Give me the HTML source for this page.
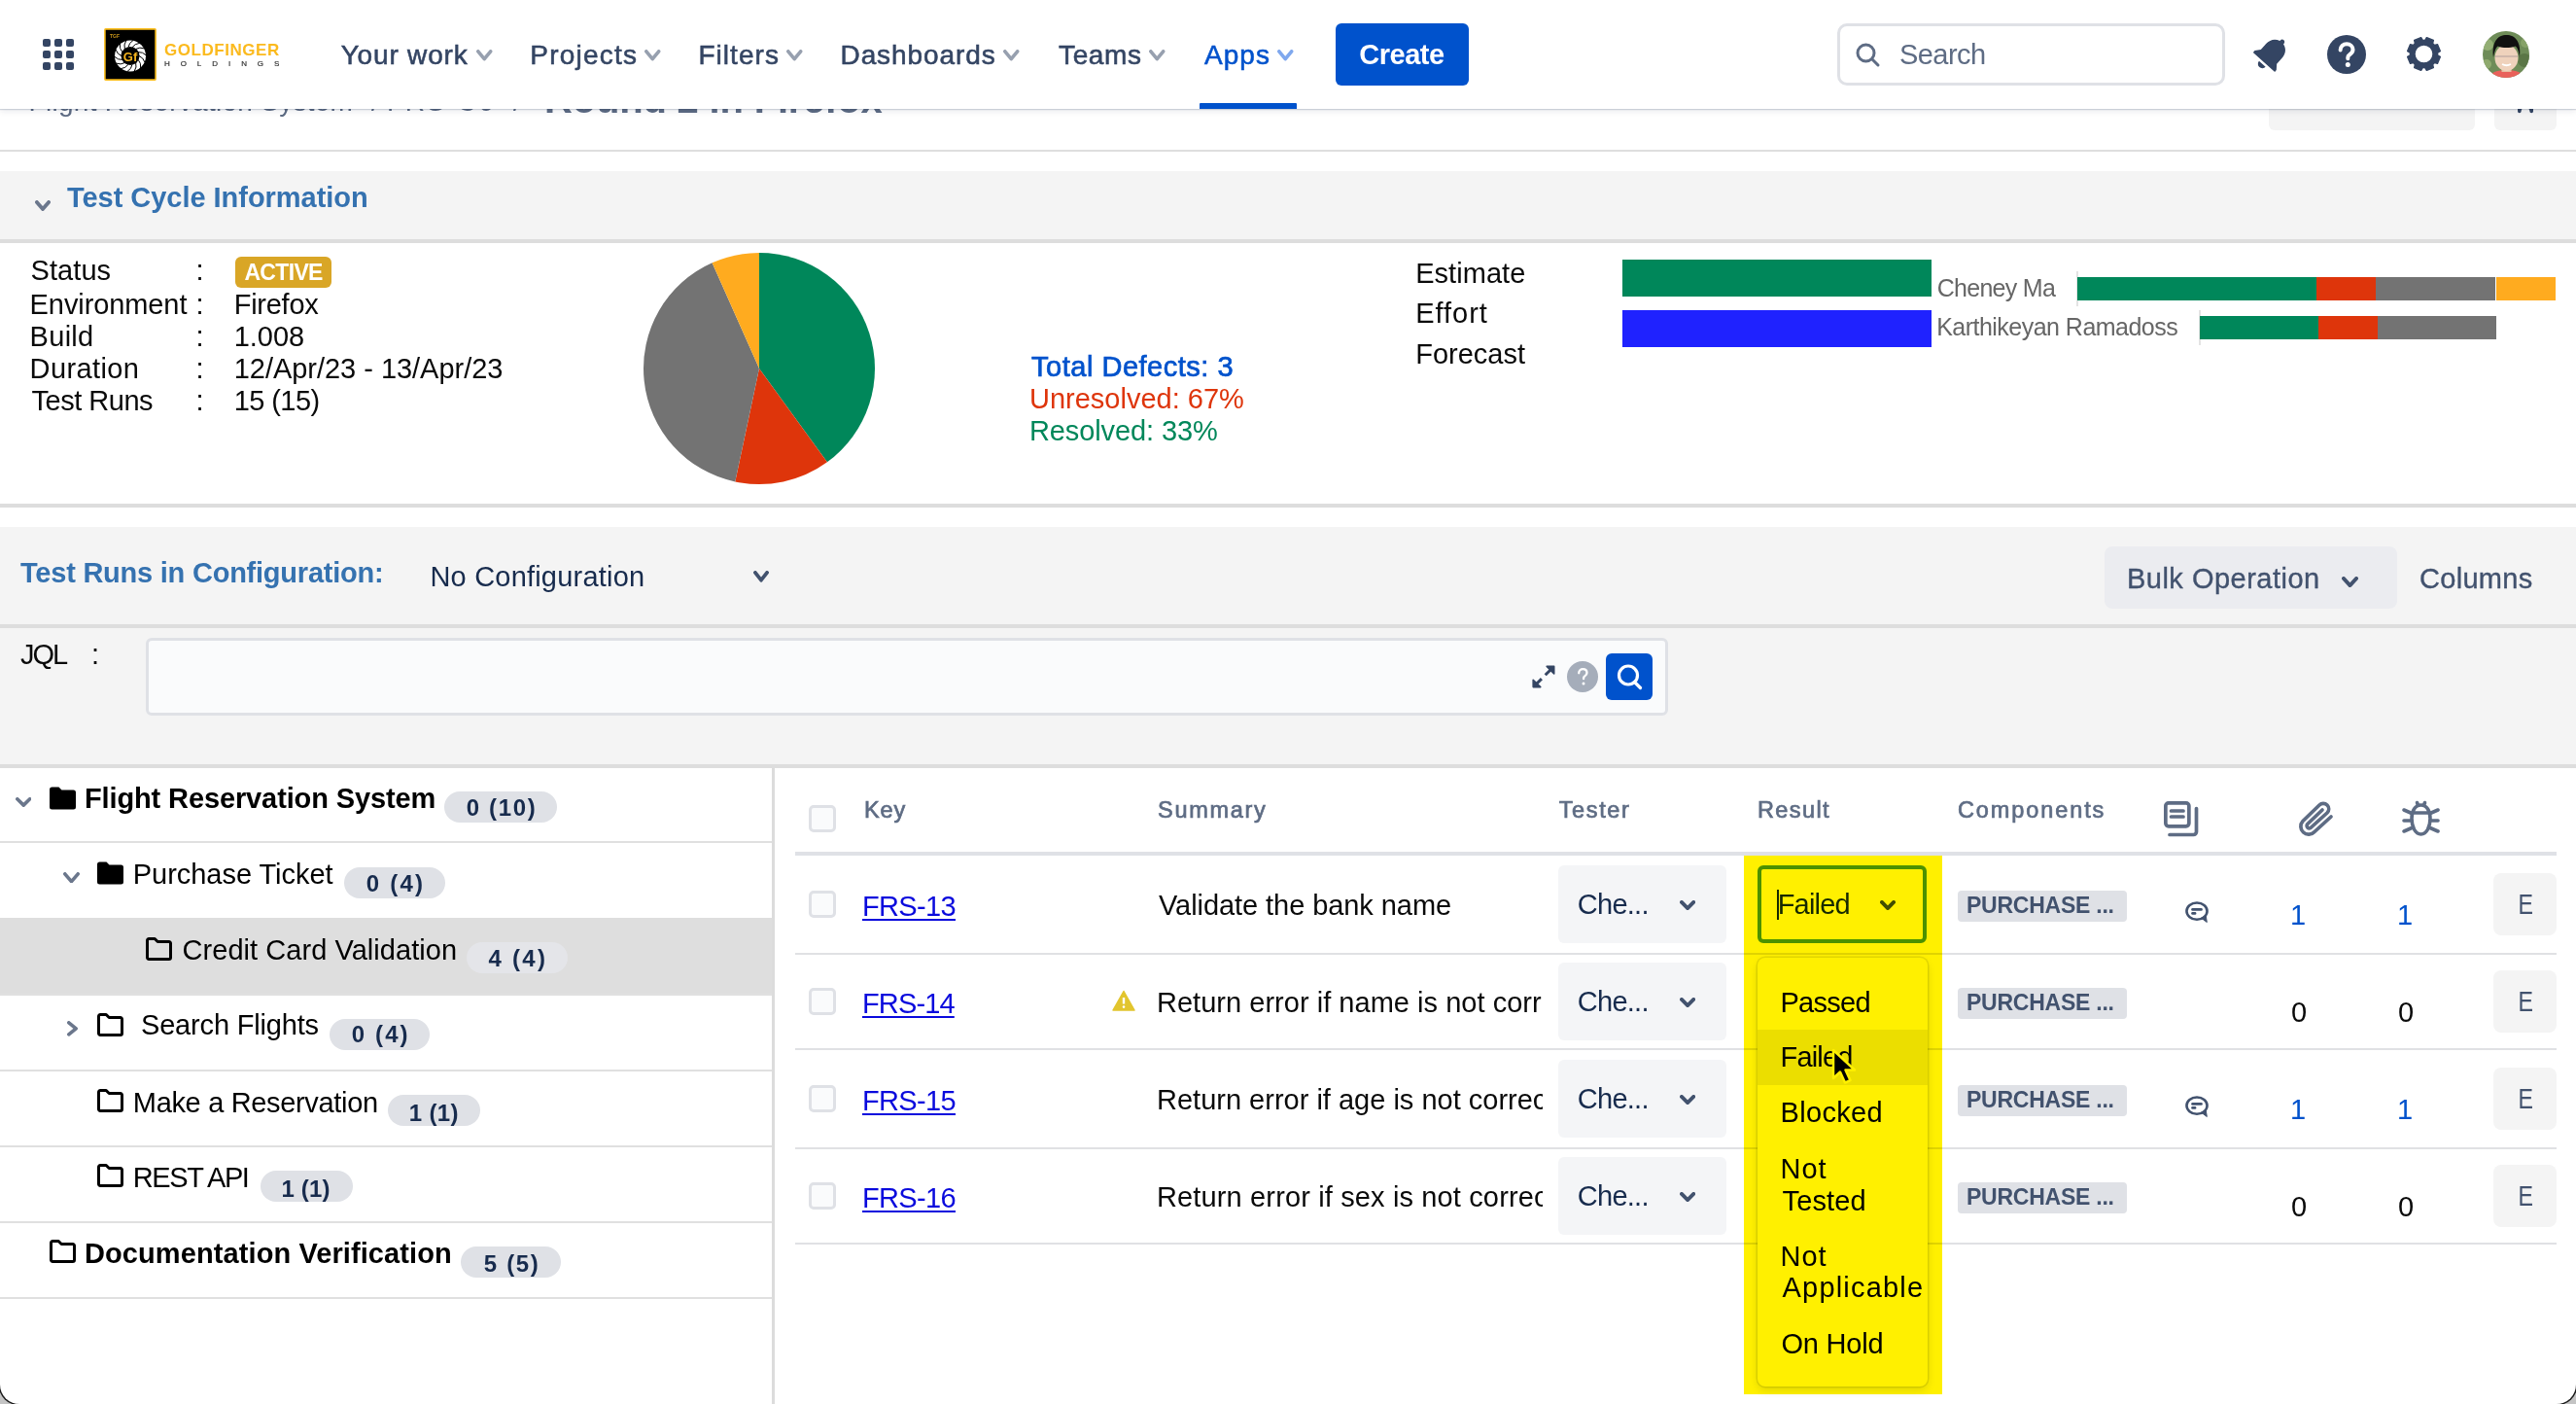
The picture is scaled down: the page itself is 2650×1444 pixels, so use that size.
<!DOCTYPE html>
<html><head><meta charset="utf-8"><style>
html,body{margin:0;padding:0;}
body{width:2650px;height:1444px;overflow:hidden;background:#C4C4C4;font-family:"Liberation Sans",sans-serif;white-space:pre;}
#win{position:absolute;left:0;top:0;width:2650px;height:1444px;background:#fff;border-radius:0 0 20px 20px;overflow:hidden;box-shadow:0 0 0 1.5px #1a1a1a;}
#hdr{position:absolute;left:0;top:0;width:2650px;height:112px;background:#fff;box-shadow:0 1px 1px rgba(9,30,66,0.16),0 3px 6px rgba(9,30,66,0.08);z-index:5;}
</style></head><body><div id="win">
<div style="position:absolute;left:29.60px;top:90.60px;font-size:28px;line-height:28px;font-weight:400;color:#5E6C84;letter-spacing:0.272px;">Flight Reservation System</div><div style="position:absolute;left:382.00px;top:90.60px;font-size:28px;line-height:28px;font-weight:400;color:#5E6C84;">/</div><div style="position:absolute;left:398.00px;top:90.60px;font-size:28px;line-height:28px;font-weight:400;color:#5E6C84;letter-spacing:1.691px;">FRS-C6</div><div style="position:absolute;left:528.00px;top:90.60px;font-size:28px;line-height:28px;font-weight:400;color:#5E6C84;">/</div><div style="position:absolute;left:560.00px;top:82.30px;font-size:40px;line-height:40px;font-weight:700;color:#5E6C84;letter-spacing:-0.192px;">Round 2 in Firefox</div><div style="position:absolute;left:2334px;top:80px;width:212px;height:54px;background:#F4F4F4;border-radius:6px"></div><div style="position:absolute;left:2566px;top:80px;width:64px;height:54px;background:#F4F4F4;border-radius:6px"></div><svg style="position:absolute;left:2588px;top:100px" width="20" height="18" viewBox="0 0 20 18"><path d="M2 12a8 8 0 0 1 16 0v2.5a1.8 1.8 0 0 1-3.6 0a4.4 4.4 0 0 0-8.8 0a1.8 1.8 0 0 1-3.6 0z" fill="#344563"/></svg><div style="position:absolute;left:0px;top:154px;width:2650px;height:2px;background:#DEDEDE"></div>
<div style="position:absolute;left:0px;top:176px;width:2650px;height:70px;background:#F4F4F4"></div><div style="position:absolute;left:0px;top:246px;width:2650px;height:4px;background:#DDDDDD"></div><svg style="position:absolute;left:36px;top:205.5px" width="16" height="11.0" viewBox="0 0 16 11.0"><polyline points="1.9,1.9 8.0,9.1 14.1,1.9" fill="none" stroke="#6B778C" stroke-width="3.8" stroke-linecap="round" stroke-linejoin="round"/></svg><div style="position:absolute;left:69.00px;top:189.00px;font-size:29px;line-height:29px;font-weight:700;color:#3572B0;letter-spacing:-0.036px;">Test Cycle Information</div>
<div style="position:absolute;left:31.60px;top:263.50px;font-size:29px;line-height:29px;font-weight:400;color:#0A0A0A;letter-spacing:0.057px;">Status</div><div style="position:absolute;left:201.50px;top:263.50px;font-size:29px;line-height:29px;font-weight:400;color:#0A0A0A;">:</div><div style="position:absolute;left:30.60px;top:298.90px;font-size:29px;line-height:29px;font-weight:400;color:#0A0A0A;letter-spacing:-0.094px;">Environment</div><div style="position:absolute;left:201.50px;top:298.90px;font-size:29px;line-height:29px;font-weight:400;color:#0A0A0A;">:</div><div style="position:absolute;left:30.60px;top:332.00px;font-size:29px;line-height:29px;font-weight:400;color:#0A0A0A;letter-spacing:0.286px;">Build</div><div style="position:absolute;left:201.50px;top:332.00px;font-size:29px;line-height:29px;font-weight:400;color:#0A0A0A;">:</div><div style="position:absolute;left:30.60px;top:365.00px;font-size:29px;line-height:29px;font-weight:400;color:#0A0A0A;letter-spacing:0.388px;">Duration</div><div style="position:absolute;left:201.50px;top:365.00px;font-size:29px;line-height:29px;font-weight:400;color:#0A0A0A;">:</div><div style="position:absolute;left:32.60px;top:397.50px;font-size:29px;line-height:29px;font-weight:400;color:#0A0A0A;letter-spacing:-0.493px;">Test Runs</div><div style="position:absolute;left:201.50px;top:397.50px;font-size:29px;line-height:29px;font-weight:400;color:#0A0A0A;">:</div><div style="position:absolute;left:242px;top:264px;width:99px;height:32px;background:#D9A626;border-radius:6px"></div><div style="position:absolute;left:251.40px;top:268.50px;font-size:23px;line-height:23px;font-weight:700;color:#fff;letter-spacing:-0.660px;">ACTIVE</div><div style="position:absolute;left:240.70px;top:298.90px;font-size:29px;line-height:29px;font-weight:400;color:#0A0A0A;letter-spacing:-0.255px;">Firefox</div><div style="position:absolute;left:240.70px;top:332.00px;font-size:29px;line-height:29px;font-weight:400;color:#0A0A0A;letter-spacing:-0.036px;">1.008</div><div style="position:absolute;left:240.70px;top:365.00px;font-size:29px;line-height:29px;font-weight:400;color:#0A0A0A;letter-spacing:-0.028px;">12/Apr/23 - 13/Apr/23</div><div style="position:absolute;left:240.70px;top:397.50px;font-size:29px;line-height:29px;font-weight:400;color:#0A0A0A;letter-spacing:-0.571px;">15 (15)</div><svg style="position:absolute;left:661px;top:259px" width="240" height="240" viewBox="0 0 240 240"><path d="M120 120 L120.00 1.00 A119 119 0 0 1 189.95 216.27 Z" fill="#00875A"/><path d="M120 120 L189.95 216.27 A119 119 0 0 1 95.26 236.40 Z" fill="#DE350B"/><path d="M120 120 L95.26 236.40 A119 119 0 0 1 71.60 11.29 Z" fill="#737373"/><path d="M120 120 L71.60 11.29 A119 119 0 0 1 120.00 1.00 Z" fill="#FFAB1F"/></svg><div style="position:absolute;left:1061.00px;top:362.60px;font-size:29px;line-height:29px;font-weight:400;color:#0052CC;letter-spacing:0.517px;-webkit-text-stroke:0.7px #0052CC">Total Defects: 3</div><div style="position:absolute;left:1059.00px;top:395.50px;font-size:29px;line-height:29px;font-weight:400;color:#DE350B;">Unresolved: 67%</div><div style="position:absolute;left:1059.00px;top:428.70px;font-size:29px;line-height:29px;font-weight:400;color:#00875A;letter-spacing:-0.106px;">Resolved: 33%</div><div style="position:absolute;left:1456.20px;top:267.00px;font-size:29px;line-height:29px;font-weight:400;color:#0A0A0A;letter-spacing:0.045px;">Estimate</div><div style="position:absolute;left:1456.20px;top:307.70px;font-size:29px;line-height:29px;font-weight:400;color:#0A0A0A;letter-spacing:0.976px;">Effort</div><div style="position:absolute;left:1456.20px;top:349.70px;font-size:29px;line-height:29px;font-weight:400;color:#0A0A0A;">Forecast</div><div style="position:absolute;left:1669px;top:267px;width:318px;height:37.5px;background:#00875A"></div><div style="position:absolute;left:1669px;top:319px;width:318px;height:37.5px;background:#1F22FF"></div><div style="position:absolute;left:1992.70px;top:283.90px;font-size:25px;line-height:25px;font-weight:400;color:#666;letter-spacing:-0.718px;">Cheney Ma</div><div style="position:absolute;left:1992.20px;top:324.10px;font-size:25px;line-height:25px;font-weight:400;color:#666;letter-spacing:-0.524px;">Karthikeyan Ramadoss</div><div style="position:absolute;left:2136px;top:279px;width:2px;height:36px;background:#E3E3E3"></div><div style="position:absolute;left:2137px;top:285px;width:246px;height:23.7px;background:#00875A"></div><div style="position:absolute;left:2383px;top:285px;width:61.4px;height:23.7px;background:#DE350B"></div><div style="position:absolute;left:2444.4px;top:285px;width:123.1px;height:23.7px;background:#737373"></div><div style="position:absolute;left:2567.5px;top:285px;width:61.5px;height:23.7px;background:#FFAB1F"></div><div style="position:absolute;left:2262px;top:319px;width:2px;height:36px;background:#E3E3E3"></div><div style="position:absolute;left:2263px;top:325.3px;width:121.6px;height:23.7px;background:#00875A"></div><div style="position:absolute;left:2384.6px;top:325.3px;width:61.2px;height:23.7px;background:#DE350B"></div><div style="position:absolute;left:2445.8px;top:325.3px;width:122.2px;height:23.7px;background:#737373"></div><div style="position:absolute;left:0px;top:518px;width:2650px;height:4px;background:#DDDDDD"></div>
<div style="position:absolute;left:0px;top:542px;width:2650px;height:100px;background:#F4F4F4"></div><div style="position:absolute;left:0px;top:642px;width:2650px;height:4px;background:#DDDDDD"></div><div style="position:absolute;left:0px;top:646px;width:2650px;height:140px;background:#F4F4F4"></div><div style="position:absolute;left:0px;top:786px;width:2650px;height:4px;background:#DDDDDD"></div><div style="position:absolute;left:21.00px;top:574.90px;font-size:29px;line-height:29px;font-weight:700;color:#3572B0;letter-spacing:-0.230px;">Test Runs in Configuration:</div><div style="position:absolute;left:442.40px;top:578.80px;font-size:29px;line-height:29px;font-weight:400;color:#172B4D;letter-spacing:0.207px;">No Configuration</div><svg style="position:absolute;left:775px;top:587px" width="16" height="11.600000000000023" viewBox="0 0 16 11.600000000000023"><polyline points="1.9,1.9 8.0,9.700000000000022 14.1,1.9" fill="none" stroke="#42526E" stroke-width="3.8" stroke-linecap="round" stroke-linejoin="round"/></svg><div style="position:absolute;left:2165px;top:562px;width:301px;height:64px;background:#EBECF0;border-radius:8px"></div><div style="position:absolute;left:2188.00px;top:580.50px;font-size:29px;line-height:29px;font-weight:400;color:#42526E;letter-spacing:0.485px;-webkit-text-stroke:0.35px #42526E">Bulk Operation</div><svg style="position:absolute;left:2409px;top:593px" width="17" height="11" viewBox="0 0 17 11"><polyline points="1.9,1.9 8.5,9.1 15.1,1.9" fill="none" stroke="#42526E" stroke-width="3.8" stroke-linecap="round" stroke-linejoin="round"/></svg><div style="position:absolute;left:2489.00px;top:580.50px;font-size:29px;line-height:29px;font-weight:400;color:#42526E;letter-spacing:0.295px;-webkit-text-stroke:0.35px #42526E">Columns</div><div style="position:absolute;left:21.00px;top:659.00px;font-size:29px;line-height:29px;font-weight:400;color:#0A0A0A;letter-spacing:-2.029px;">JQL</div><div style="position:absolute;left:94.00px;top:659.00px;font-size:29px;line-height:29px;font-weight:400;color:#0A0A0A;">:</div><div style="position:absolute;left:150px;top:656px;width:1566px;height:80px;box-sizing:border-box;background:#FAFBFC;border:3px solid #DFE1E6;border-radius:6px"></div><svg style="position:absolute;left:1575px;top:683px" width="26" height="26" viewBox="0 0 26 26"><path d="M16.2 2.4H23.7V10z" fill="#344563" stroke="#344563" stroke-width="1.6" stroke-linejoin="round"/><path d="M2.2 16.4V23.6H9.8z" fill="#344563" stroke="#344563" stroke-width="1.6" stroke-linejoin="round"/><line x1="14.7" y1="11.3" x2="20" y2="6" stroke="#344563" stroke-width="3"/><line x1="10.9" y1="15.1" x2="5.5" y2="20.5" stroke="#344563" stroke-width="3"/></svg><svg style="position:absolute;left:1612px;top:680px" width="32" height="32" viewBox="0 0 32 32"><circle cx="16" cy="16" r="16" fill="#A5ADBA"/><path d="M12.2 12.3c0-2.4 1.8-4.1 4.2-4.1s4.1 1.6 4.1 3.8c0 1.8-1 2.6-2.2 3.4-0.9 0.6-1.2 1-1.2 1.9v0.9" fill="none" stroke="#fff" stroke-width="2.3" stroke-linecap="round"/><circle cx="17" cy="22.9" r="1.5" fill="#fff"/></svg><div style="position:absolute;left:1652px;top:672px;width:48px;height:48px;background:#0052CC;border-radius:6px"></div><svg style="position:absolute;left:1652px;top:672px" width="48" height="48" viewBox="0 0 48 48"><circle cx="23" cy="22.5" r="9.5" fill="none" stroke="#fff" stroke-width="3.2"/><line x1="29.5" y1="29.5" x2="35.5" y2="35.5" stroke="#fff" stroke-width="3.2" stroke-linecap="round"/></svg>
<div style="position:absolute;left:794px;top:790px;width:3px;height:654px;background:#DCDCDC"></div><div style="position:absolute;left:0px;top:944px;width:794px;height:79px;background:#DEDEDE"></div><div style="position:absolute;left:0px;top:865px;width:794px;height:2px;background:#E0E0E0"></div><div style="position:absolute;left:0px;top:1022px;width:794px;height:2px;background:#E0E0E0"></div><div style="position:absolute;left:0px;top:1100px;width:794px;height:2px;background:#E0E0E0"></div><div style="position:absolute;left:0px;top:1178px;width:794px;height:2px;background:#E0E0E0"></div><div style="position:absolute;left:0px;top:1256px;width:794px;height:2px;background:#E0E0E0"></div><div style="position:absolute;left:0px;top:1334px;width:794px;height:2px;background:#E0E0E0"></div><svg style="position:absolute;left:15.5px;top:819.8px" width="16.5" height="9.900000000000091" viewBox="0 0 16.5 9.900000000000091"><polyline points="1.8,1.8 8.25,8.10000000000009 14.7,1.8" fill="none" stroke="#6B778C" stroke-width="3.6" stroke-linecap="round" stroke-linejoin="round"/></svg><svg style="position:absolute;left:50.6px;top:808.6px" width="27" height="24" viewBox="0 0 27 24"><path d="M0 3a2.5 2.5 0 0 1 2.5-2.5h7l3 3h12a2.5 2.5 0 0 1 2.5 2.5v15a2.5 2.5 0 0 1-2.5 2.5h-22A2.5 2.5 0 0 1 0 21z" fill="#000"/></svg><div style="position:absolute;left:86.90px;top:807.20px;font-size:29px;line-height:29px;font-weight:700;color:#000;letter-spacing:-0.114px;">Flight Reservation System</div><div style="position:absolute;left:457px;top:814px;width:116px;height:32px;background:#DFE1E6;border-radius:16px"></div><div style="position:absolute;left:479.80px;top:819.00px;font-size:24px;line-height:24px;font-weight:700;color:#172B4D;letter-spacing:1.639px;">0 (10)</div><svg style="position:absolute;left:65px;top:896.5px" width="17" height="11.5" viewBox="0 0 17 11.5"><polyline points="1.8,1.8 8.5,9.7 15.2,1.8" fill="none" stroke="#6B778C" stroke-width="3.6" stroke-linecap="round" stroke-linejoin="round"/></svg><svg style="position:absolute;left:100px;top:885.6px" width="27" height="24" viewBox="0 0 27 24"><path d="M0 3a2.5 2.5 0 0 1 2.5-2.5h7l3 3h12a2.5 2.5 0 0 1 2.5 2.5v15a2.5 2.5 0 0 1-2.5 2.5h-22A2.5 2.5 0 0 1 0 21z" fill="#000"/></svg><div style="position:absolute;left:136.80px;top:884.90px;font-size:29px;line-height:29px;font-weight:400;color:#000;letter-spacing:-0.041px;">Purchase Ticket</div><div style="position:absolute;left:354px;top:891.8px;width:103.5px;height:32.0px;background:#DFE1E6;border-radius:16px"></div><div style="position:absolute;left:376.70px;top:896.60px;font-size:24px;line-height:24px;font-weight:700;color:#172B4D;letter-spacing:2.236px;">0 (4)</div><svg style="position:absolute;left:150px;top:964px" width="27" height="24" viewBox="0 0 27 24"><path d="M1.5 3.2a1.7 1.7 0 0 1 1.7-1.7h6l3 3h11.6a1.7 1.7 0 0 1 1.7 1.7v14.6a1.7 1.7 0 0 1-1.7 1.7H3.2a1.7 1.7 0 0 1-1.7-1.7z" fill="none" stroke="#000" stroke-width="3" stroke-linejoin="round"/></svg><div style="position:absolute;left:187.50px;top:962.50px;font-size:29px;line-height:29px;font-weight:400;color:#000;letter-spacing:0.052px;">Credit Card Validation</div><div style="position:absolute;left:480px;top:969.4px;width:104px;height:32.0px;background:#E4E5E9;border-radius:16px"></div><div style="position:absolute;left:502.50px;top:974.30px;font-size:24px;line-height:24px;font-weight:700;color:#172B4D;letter-spacing:2.286px;">4 (4)</div><svg style="position:absolute;left:69px;top:1050px" width="11" height="15.700000000000045" viewBox="0 0 11 15.700000000000045"><polyline points="1.8,1.8 9.2,7.850000000000023 1.8,13.900000000000045" fill="none" stroke="#6B778C" stroke-width="3.6" stroke-linecap="round" stroke-linejoin="round"/></svg><svg style="position:absolute;left:100px;top:1042px" width="27" height="24" viewBox="0 0 27 24"><path d="M1.5 3.2a1.7 1.7 0 0 1 1.7-1.7h6l3 3h11.6a1.7 1.7 0 0 1 1.7 1.7v14.6a1.7 1.7 0 0 1-1.7 1.7H3.2a1.7 1.7 0 0 1-1.7-1.7z" fill="none" stroke="#000" stroke-width="3" stroke-linejoin="round"/></svg><div style="position:absolute;left:145.00px;top:1040.00px;font-size:29px;line-height:29px;font-weight:400;color:#000;letter-spacing:-0.174px;">Search Flights</div><div style="position:absolute;left:338.5px;top:1047.7px;width:103.5px;height:32.0px;background:#DFE1E6;border-radius:16px"></div><div style="position:absolute;left:361.80px;top:1052.00px;font-size:24px;line-height:24px;font-weight:700;color:#172B4D;letter-spacing:2.111px;">0 (4)</div><svg style="position:absolute;left:100px;top:1120px" width="27" height="24" viewBox="0 0 27 24"><path d="M1.5 3.2a1.7 1.7 0 0 1 1.7-1.7h6l3 3h11.6a1.7 1.7 0 0 1 1.7 1.7v14.6a1.7 1.7 0 0 1-1.7 1.7H3.2a1.7 1.7 0 0 1-1.7-1.7z" fill="none" stroke="#000" stroke-width="3" stroke-linejoin="round"/></svg><div style="position:absolute;left:136.80px;top:1119.70px;font-size:29px;line-height:29px;font-weight:400;color:#000;letter-spacing:-0.328px;">Make a Reservation</div><div style="position:absolute;left:399px;top:1126px;width:94.80000000000001px;height:31.59999999999991px;background:#DFE1E6;border-radius:16px"></div><div style="position:absolute;left:420.70px;top:1133.00px;font-size:24px;line-height:24px;font-weight:700;color:#172B4D;letter-spacing:0.361px;">1 (1)</div><svg style="position:absolute;left:100px;top:1197px" width="27" height="24" viewBox="0 0 27 24"><path d="M1.5 3.2a1.7 1.7 0 0 1 1.7-1.7h6l3 3h11.6a1.7 1.7 0 0 1 1.7 1.7v14.6a1.7 1.7 0 0 1-1.7 1.7H3.2a1.7 1.7 0 0 1-1.7-1.7z" fill="none" stroke="#000" stroke-width="3" stroke-linejoin="round"/></svg><div style="position:absolute;left:136.80px;top:1197.00px;font-size:29px;line-height:29px;font-weight:400;color:#000;letter-spacing:-1.412px;">REST API</div><div style="position:absolute;left:267.7px;top:1204px;width:95.0px;height:32px;background:#DFE1E6;border-radius:16px"></div><div style="position:absolute;left:289.40px;top:1210.60px;font-size:24px;line-height:24px;font-weight:700;color:#172B4D;letter-spacing:0.186px;">1 (1)</div><svg style="position:absolute;left:50.6px;top:1275px" width="27" height="24" viewBox="0 0 27 24"><path d="M1.5 3.2a1.7 1.7 0 0 1 1.7-1.7h6l3 3h11.6a1.7 1.7 0 0 1 1.7 1.7v14.6a1.7 1.7 0 0 1-1.7 1.7H3.2a1.7 1.7 0 0 1-1.7-1.7z" fill="none" stroke="#000" stroke-width="3" stroke-linejoin="round"/></svg><div style="position:absolute;left:87.00px;top:1275.00px;font-size:29px;line-height:29px;font-weight:700;color:#000;letter-spacing:0.091px;">Documentation Verification</div><div style="position:absolute;left:474px;top:1282px;width:102.70000000000005px;height:31.5px;background:#DFE1E6;border-radius:16px"></div><div style="position:absolute;left:497.80px;top:1288.30px;font-size:24px;line-height:24px;font-weight:700;color:#172B4D;letter-spacing:1.661px;">5 (5)</div>
<div style="position:absolute;left:832px;top:828.4px;width:28px;height:28px;box-sizing:border-box;border:3px solid #DFE1E6;background:#FAFBFC;border-radius:5px"></div><div style="position:absolute;left:889.00px;top:821.70px;font-size:23.5px;line-height:23.5px;font-weight:400;color:#5E6C84;letter-spacing:0.878px;-webkit-text-stroke:0.7px #5E6C84">Key</div><div style="position:absolute;left:1191.00px;top:821.70px;font-size:23.5px;line-height:23.5px;font-weight:400;color:#5E6C84;letter-spacing:1.702px;-webkit-text-stroke:0.7px #5E6C84">Summary</div><div style="position:absolute;left:1603.70px;top:821.70px;font-size:23.5px;line-height:23.5px;font-weight:400;color:#5E6C84;letter-spacing:1.626px;-webkit-text-stroke:0.7px #5E6C84">Tester</div><div style="position:absolute;left:1808.00px;top:821.70px;font-size:23.5px;line-height:23.5px;font-weight:400;color:#5E6C84;letter-spacing:1.384px;-webkit-text-stroke:0.7px #5E6C84">Result</div><div style="position:absolute;left:2014.00px;top:821.70px;font-size:23.5px;line-height:23.5px;font-weight:400;color:#5E6C84;letter-spacing:1.901px;-webkit-text-stroke:0.7px #5E6C84">Components</div><svg style="position:absolute;left:2224px;top:822px" width="40" height="40" viewBox="0 0 40 40" fill="none" stroke="#5E6C84" stroke-width="3.7" stroke-linecap="round" stroke-linejoin="round"><rect x="3.85" y="3.85" width="24" height="24" rx="3"/><line x1="9.5" y1="12" x2="22" y2="12"/><line x1="9.5" y1="18" x2="22" y2="18"/><path d="M35.5 9.5v24a3 3 0 0 1-3 3h-24.5"/></svg><svg style="position:absolute;left:2362px;top:822px" width="40" height="40" viewBox="0 0 40 40" fill="none" stroke="#5E6C84" stroke-width="3.7" stroke-linecap="round"><path d="M36 18L19 33.5a8 8 0 0 1-12-11L24 6a5.5 5.5 0 0 1 8 8L15.5 29a2.5 2.5 0 0 1-3.7-3.5L27 11"/></svg><svg style="position:absolute;left:2470px;top:822px" width="40" height="40" viewBox="0 0 40 40" fill="none" stroke="#5E6C84" stroke-width="3.6" stroke-linecap="round"><path d="M20.5 6c-6 0-9.5 6-9.5 14s3.5 16 9.5 16 9.5-8 9.5-16-3.5-14-9.5-14z"/><line x1="11.5" y1="14" x2="29.5" y2="14"/><line x1="16.5" y1="3.5" x2="17.5" y2="6"/><line x1="24.5" y1="3.5" x2="23.5" y2="6"/><line x1="3" y1="11" x2="11" y2="14.5"/><line x1="38" y1="11" x2="30" y2="14.5"/><line x1="3" y1="22" x2="11" y2="22"/><line x1="38" y1="22" x2="30" y2="22"/><line x1="3" y1="33" x2="11" y2="29.5"/><line x1="38" y1="33" x2="30" y2="29.5"/></svg><div style="position:absolute;left:818px;top:876px;width:1812px;height:4px;background:#DFE1E6"></div><div style="position:absolute;left:818px;top:980px;width:1812px;height:2px;background:#E0E1E4"></div><div style="position:absolute;left:818px;top:1077.6px;width:1812px;height:2px;background:#E0E1E4"></div><div style="position:absolute;left:818px;top:1179.8px;width:1812px;height:2px;background:#E0E1E4"></div><div style="position:absolute;left:818px;top:1277.9px;width:1812px;height:2px;background:#E0E1E4"></div><div style="position:absolute;left:832px;top:916.2px;width:28px;height:28px;box-sizing:border-box;border:3px solid #DFE1E6;background:#FAFBFC;border-radius:5px"></div><div style="position:absolute;left:887.00px;top:917.60px;font-size:29px;line-height:29px;font-weight:400;color:#0A0ADD;letter-spacing:-0.657px;text-decoration:underline;text-decoration-thickness:2px;text-underline-offset:3px">FRS-13</div><div style="position:absolute;left:1100px;top:905px;width:487px;height:60px;overflow:hidden"><div style="position:absolute;left:92.00px;top:11.90px;font-size:29px;line-height:29px;font-weight:400;color:#0A0A0A;letter-spacing:-0.068px;">Validate the bank name</div></div><div style="position:absolute;left:1603px;top:890px;width:173px;height:80px;background:#F4F5F7;border-radius:6px"></div><div style="position:absolute;left:1622.80px;top:915.80px;font-size:29px;line-height:29px;font-weight:400;color:#172B4D;letter-spacing:-0.743px;">Che...</div><svg style="position:absolute;left:1727.8px;top:925.8px" width="16.200000000000045" height="10.100000000000023" viewBox="0 0 16.200000000000045 10.100000000000023"><polyline points="1.95,1.95 8.100000000000023,8.150000000000023 14.250000000000046,1.95" fill="none" stroke="#42526E" stroke-width="3.9" stroke-linecap="round" stroke-linejoin="round"/></svg><div style="position:absolute;left:2014px;top:916px;width:174px;height:31.6px;background:#DFE1E6;border-radius:4px"></div><div style="position:absolute;left:2023.00px;top:920.30px;font-size:23px;line-height:23px;font-weight:700;color:#42526E;letter-spacing:-0.240px;">PURCHASE ...</div><svg style="position:absolute;left:2244px;top:925px" width="30" height="28" viewBox="0 0 30 28"><ellipse cx="16" cy="12.1" rx="10.55" ry="8.6" fill="none" stroke="#42526E" stroke-width="2.6"/><path d="M20.5 19.2L25.2 16.5L26.3 23.5z" fill="#42526E" stroke="#42526E" stroke-width="1" stroke-linejoin="round"/><line x1="11.5" y1="10.4" x2="20.5" y2="10.4" stroke="#42526E" stroke-width="2.6" stroke-linecap="round"/><line x1="11.5" y1="14.4" x2="14.1" y2="14.4" stroke="#42526E" stroke-width="2.6" stroke-linecap="round"/></svg><div style="position:absolute;left:2356.00px;top:927.20px;font-size:29px;line-height:29px;font-weight:400;color:#0052CC;">1</div><div style="position:absolute;left:2466.00px;top:927.20px;font-size:29px;line-height:29px;font-weight:400;color:#0052CC;">1</div><div style="position:absolute;left:2565px;top:898px;width:65px;height:63.5px;background:#F4F4F4;border-radius:8px"></div><div style="position:absolute;left:2589.70px;top:916.00px;font-size:29px;line-height:29px;font-weight:400;color:#42526E;transform:scaleX(0.8);transform-origin:2px 0">E</div><div style="position:absolute;left:832px;top:1016.2px;width:28px;height:28px;box-sizing:border-box;border:3px solid #DFE1E6;background:#FAFBFC;border-radius:5px"></div><div style="position:absolute;left:887.00px;top:1017.60px;font-size:29px;line-height:29px;font-weight:400;color:#0A0ADD;letter-spacing:-0.857px;text-decoration:underline;text-decoration-thickness:2px;text-underline-offset:3px">FRS-14</div><div style="position:absolute;left:1100px;top:1005px;width:487px;height:60px;overflow:hidden"><div style="position:absolute;left:90.00px;top:11.90px;font-size:29px;line-height:29px;font-weight:400;color:#0A0A0A;letter-spacing:0.026px;">Return error if name is not corr</div></div><div style="position:absolute;left:1603px;top:990px;width:173px;height:80px;background:#F4F5F7;border-radius:6px"></div><div style="position:absolute;left:1622.80px;top:1015.80px;font-size:29px;line-height:29px;font-weight:400;color:#172B4D;letter-spacing:-0.743px;">Che...</div><svg style="position:absolute;left:1727.8px;top:1025.8px" width="16.200000000000045" height="10.100000000000136" viewBox="0 0 16.200000000000045 10.100000000000136"><polyline points="1.95,1.95 8.100000000000023,8.150000000000137 14.250000000000046,1.95" fill="none" stroke="#42526E" stroke-width="3.9" stroke-linecap="round" stroke-linejoin="round"/></svg><div style="position:absolute;left:2014px;top:1016px;width:174px;height:31.6px;background:#DFE1E6;border-radius:4px"></div><div style="position:absolute;left:2023.00px;top:1020.30px;font-size:23px;line-height:23px;font-weight:700;color:#42526E;letter-spacing:-0.240px;">PURCHASE ...</div><div style="position:absolute;left:2357.00px;top:1027.20px;font-size:29px;line-height:29px;font-weight:400;color:#0A0A0A;">0</div><div style="position:absolute;left:2467.00px;top:1027.20px;font-size:29px;line-height:29px;font-weight:400;color:#0A0A0A;">0</div><div style="position:absolute;left:2565px;top:998px;width:65px;height:63.5px;background:#F4F4F4;border-radius:8px"></div><div style="position:absolute;left:2589.70px;top:1016.00px;font-size:29px;line-height:29px;font-weight:400;color:#42526E;transform:scaleX(0.8);transform-origin:2px 0">E</div><div style="position:absolute;left:832px;top:1116.2px;width:28px;height:28px;box-sizing:border-box;border:3px solid #DFE1E6;background:#FAFBFC;border-radius:5px"></div><div style="position:absolute;left:887.00px;top:1117.60px;font-size:29px;line-height:29px;font-weight:400;color:#0A0ADD;letter-spacing:-0.657px;text-decoration:underline;text-decoration-thickness:2px;text-underline-offset:3px">FRS-15</div><div style="position:absolute;left:1100px;top:1105px;width:487px;height:60px;overflow:hidden"><div style="position:absolute;left:90.00px;top:11.90px;font-size:29px;line-height:29px;font-weight:400;color:#0A0A0A;">Return error if age is not correc</div></div><div style="position:absolute;left:1603px;top:1090px;width:173px;height:80px;background:#F4F5F7;border-radius:6px"></div><div style="position:absolute;left:1622.80px;top:1115.80px;font-size:29px;line-height:29px;font-weight:400;color:#172B4D;letter-spacing:-0.743px;">Che...</div><svg style="position:absolute;left:1727.8px;top:1125.8px" width="16.200000000000045" height="10.100000000000136" viewBox="0 0 16.200000000000045 10.100000000000136"><polyline points="1.95,1.95 8.100000000000023,8.150000000000137 14.250000000000046,1.95" fill="none" stroke="#42526E" stroke-width="3.9" stroke-linecap="round" stroke-linejoin="round"/></svg><div style="position:absolute;left:2014px;top:1116px;width:174px;height:31.6px;background:#DFE1E6;border-radius:4px"></div><div style="position:absolute;left:2023.00px;top:1120.30px;font-size:23px;line-height:23px;font-weight:700;color:#42526E;letter-spacing:-0.240px;">PURCHASE ...</div><svg style="position:absolute;left:2244px;top:1125px" width="30" height="28" viewBox="0 0 30 28"><ellipse cx="16" cy="12.1" rx="10.55" ry="8.6" fill="none" stroke="#42526E" stroke-width="2.6"/><path d="M20.5 19.2L25.2 16.5L26.3 23.5z" fill="#42526E" stroke="#42526E" stroke-width="1" stroke-linejoin="round"/><line x1="11.5" y1="10.4" x2="20.5" y2="10.4" stroke="#42526E" stroke-width="2.6" stroke-linecap="round"/><line x1="11.5" y1="14.4" x2="14.1" y2="14.4" stroke="#42526E" stroke-width="2.6" stroke-linecap="round"/></svg><div style="position:absolute;left:2356.00px;top:1127.20px;font-size:29px;line-height:29px;font-weight:400;color:#0052CC;">1</div><div style="position:absolute;left:2466.00px;top:1127.20px;font-size:29px;line-height:29px;font-weight:400;color:#0052CC;">1</div><div style="position:absolute;left:2565px;top:1098px;width:65px;height:63.5px;background:#F4F4F4;border-radius:8px"></div><div style="position:absolute;left:2589.70px;top:1116.00px;font-size:29px;line-height:29px;font-weight:400;color:#42526E;transform:scaleX(0.8);transform-origin:2px 0">E</div><div style="position:absolute;left:832px;top:1216.2px;width:28px;height:28px;box-sizing:border-box;border:3px solid #DFE1E6;background:#FAFBFC;border-radius:5px"></div><div style="position:absolute;left:887.00px;top:1217.60px;font-size:29px;line-height:29px;font-weight:400;color:#0A0ADD;letter-spacing:-0.657px;text-decoration:underline;text-decoration-thickness:2px;text-underline-offset:3px">FRS-16</div><div style="position:absolute;left:1100px;top:1205px;width:487px;height:60px;overflow:hidden"><div style="position:absolute;left:90.00px;top:11.90px;font-size:29px;line-height:29px;font-weight:400;color:#0A0A0A;letter-spacing:0.138px;">Return error if sex is not correc</div></div><div style="position:absolute;left:1603px;top:1190px;width:173px;height:80px;background:#F4F5F7;border-radius:6px"></div><div style="position:absolute;left:1622.80px;top:1215.80px;font-size:29px;line-height:29px;font-weight:400;color:#172B4D;letter-spacing:-0.743px;">Che...</div><svg style="position:absolute;left:1727.8px;top:1225.8px" width="16.200000000000045" height="10.100000000000136" viewBox="0 0 16.200000000000045 10.100000000000136"><polyline points="1.95,1.95 8.100000000000023,8.150000000000137 14.250000000000046,1.95" fill="none" stroke="#42526E" stroke-width="3.9" stroke-linecap="round" stroke-linejoin="round"/></svg><div style="position:absolute;left:2014px;top:1216px;width:174px;height:31.6px;background:#DFE1E6;border-radius:4px"></div><div style="position:absolute;left:2023.00px;top:1220.30px;font-size:23px;line-height:23px;font-weight:700;color:#42526E;letter-spacing:-0.240px;">PURCHASE ...</div><div style="position:absolute;left:2357.00px;top:1227.20px;font-size:29px;line-height:29px;font-weight:400;color:#0A0A0A;">0</div><div style="position:absolute;left:2467.00px;top:1227.20px;font-size:29px;line-height:29px;font-weight:400;color:#0A0A0A;">0</div><div style="position:absolute;left:2565px;top:1198px;width:65px;height:63.5px;background:#F4F4F4;border-radius:8px"></div><div style="position:absolute;left:2589.70px;top:1216.00px;font-size:29px;line-height:29px;font-weight:400;color:#42526E;transform:scaleX(0.8);transform-origin:2px 0">E</div><svg style="position:absolute;left:1144px;top:1018px" width="24" height="22" viewBox="0 0 24 22"><path d="M12 1.5L23 21H1z" fill="#E2C52E" stroke="#E2C52E" stroke-width="1.5" stroke-linejoin="round"/><line x1="12" y1="8" x2="12" y2="14.5" stroke="#fff" stroke-width="2.4"/><circle cx="12" cy="17.6" r="1.3" fill="#fff"/></svg><div style="position:absolute;left:1808px;top:890px;width:174px;height:80px;box-sizing:border-box;border:4px solid #4C9AFF;border-radius:6px;background:#fff"></div><div style="position:absolute;left:1828px;top:915px;width:2.2px;height:31px;background:#172B4D"></div><div style="position:absolute;left:1828.70px;top:915.90px;font-size:29px;line-height:29px;font-weight:400;color:#172B4D;letter-spacing:-0.811px;">Failed</div><svg style="position:absolute;left:1934px;top:926px" width="16" height="10" viewBox="0 0 16 10"><polyline points="1.95,1.95 8.0,8.05 14.05,1.95" fill="none" stroke="#42526E" stroke-width="3.9" stroke-linecap="round" stroke-linejoin="round"/></svg><div style="position:absolute;left:1808px;top:985px;width:174.5px;height:441px;background:#fff;border-radius:8px;box-shadow:0 0 0 1.5px rgba(9,30,66,0.10),0 4px 10px rgba(9,30,66,0.12)"></div><div style="position:absolute;left:1808px;top:1059.2px;width:174.5px;height:56.4px;background:#EBECF0"></div><div style="position:absolute;left:1831.50px;top:1016.90px;font-size:29px;line-height:29px;font-weight:400;color:#000;letter-spacing:-0.720px;">Passed</div><div style="position:absolute;left:1831.50px;top:1073.30px;font-size:29px;line-height:29px;font-weight:400;color:#000;letter-spacing:-0.811px;">Failed</div><div style="position:absolute;left:1831.50px;top:1130.40px;font-size:29px;line-height:29px;font-weight:400;color:#000;letter-spacing:0.326px;">Blocked</div><div style="position:absolute;left:1831.50px;top:1187.60px;font-size:29px;line-height:29px;font-weight:400;color:#000;letter-spacing:0.964px;">Not</div><div style="position:absolute;left:1833.50px;top:1220.50px;font-size:29px;line-height:29px;font-weight:400;color:#000;letter-spacing:0.137px;">Tested</div><div style="position:absolute;left:1831.50px;top:1277.60px;font-size:29px;line-height:29px;font-weight:400;color:#000;letter-spacing:0.964px;">Not</div><div style="position:absolute;left:1833.50px;top:1310.30px;font-size:29px;line-height:29px;font-weight:400;color:#000;letter-spacing:1.202px;">Applicable</div><div style="position:absolute;left:1832.50px;top:1367.50px;font-size:29px;line-height:29px;font-weight:400;color:#000;letter-spacing:-0.209px;">On Hold</div><svg style="position:absolute;left:1882px;top:1077px" width="30" height="42" viewBox="0 0 30 42"><path d="M4 3v29l7-6.5 5 11 5.5-2.4-5-10.6h9.5z" fill="#000" stroke="#fff" stroke-width="2.5" stroke-linejoin="round"/></svg><div style="position:absolute;left:1794px;top:879.7px;width:204px;height:554.5px;background:#FFF000;mix-blend-mode:multiply"></div>
<div id="hdr"><div style="position:absolute;left:44px;top:40px;width:8px;height:8px;background:#344563;border-radius:2px"></div><div style="position:absolute;left:44px;top:52px;width:8px;height:8px;background:#344563;border-radius:2px"></div><div style="position:absolute;left:44px;top:64px;width:8px;height:8px;background:#344563;border-radius:2px"></div><div style="position:absolute;left:56px;top:40px;width:8px;height:8px;background:#344563;border-radius:2px"></div><div style="position:absolute;left:56px;top:52px;width:8px;height:8px;background:#344563;border-radius:2px"></div><div style="position:absolute;left:56px;top:64px;width:8px;height:8px;background:#344563;border-radius:2px"></div><div style="position:absolute;left:68px;top:40px;width:8px;height:8px;background:#344563;border-radius:2px"></div><div style="position:absolute;left:68px;top:52px;width:8px;height:8px;background:#344563;border-radius:2px"></div><div style="position:absolute;left:68px;top:64px;width:8px;height:8px;background:#344563;border-radius:2px"></div><svg style="position:absolute;left:107px;top:29px" width="54" height="54" viewBox="0 0 54 54"><rect x="0.9" y="0.9" width="52.2" height="52.2" fill="#000" stroke="#FBBE1E" stroke-width="1.6" rx="0.8"/><circle cx="27" cy="28.5" r="16" fill="#fff"/><path d="M36.00 28.50 Q40.40 30.12 42.07 35.23" fill="none" stroke="#000" stroke-width="1"/><path d="M35.11 32.40 Q38.37 35.77 37.65 41.10" fill="none" stroke="#000" stroke-width="1"/><path d="M32.61 35.54 Q34.09 39.99 31.13 44.47" fill="none" stroke="#000" stroke-width="1"/><path d="M29.00 37.27 Q28.41 41.93 23.79 44.69" fill="none" stroke="#000" stroke-width="1"/><path d="M25.00 37.27 Q22.44 41.21 17.09 41.69" fill="none" stroke="#000" stroke-width="1"/><path d="M21.39 35.54 Q17.38 37.97 12.35 36.08" fill="none" stroke="#000" stroke-width="1"/><path d="M18.89 32.40 Q14.22 32.86 10.51 28.98" fill="none" stroke="#000" stroke-width="1"/><path d="M18.00 28.50 Q13.60 26.88 11.93 21.77" fill="none" stroke="#000" stroke-width="1"/><path d="M18.89 24.60 Q15.63 21.23 16.35 15.90" fill="none" stroke="#000" stroke-width="1"/><path d="M21.39 21.46 Q19.91 17.01 22.87 12.53" fill="none" stroke="#000" stroke-width="1"/><path d="M25.00 19.73 Q25.59 15.07 30.21 12.31" fill="none" stroke="#000" stroke-width="1"/><path d="M29.00 19.73 Q31.56 15.79 36.91 15.31" fill="none" stroke="#000" stroke-width="1"/><path d="M32.61 21.46 Q36.62 19.03 41.65 20.92" fill="none" stroke="#000" stroke-width="1"/><path d="M35.11 24.60 Q39.78 24.14 43.49 28.02" fill="none" stroke="#000" stroke-width="1"/><circle cx="27" cy="28.5" r="9.5" fill="#000"/><text x="27" y="33.5" text-anchor="middle" font-family="Liberation Sans" font-weight="700" font-size="13" fill="#F5B41F">Gf</text><text x="6" y="10" font-family="Liberation Sans" font-weight="700" font-size="5" fill="#C9961A">TGF</text></svg><div style="position:absolute;left:169.00px;top:42.70px;font-size:17px;line-height:17px;font-weight:700;color:#FBBA1E;letter-spacing:0.550px;">GOLDFINGER</div><div style="position:absolute;left:169.00px;top:61.70px;font-size:8px;line-height:8px;font-weight:400;color:#333;letter-spacing:10.936px;-webkit-text-stroke:0.2px #333">HOLDINGS</div><div style="position:absolute;left:350.70px;top:43.00px;font-size:28px;line-height:28px;font-weight:400;color:#344563;letter-spacing:0.816px;-webkit-text-stroke:0.55px #344563">Your work</div><svg style="position:absolute;left:490px;top:51px" width="16.5" height="11.5" viewBox="0 0 16.5 11.5"><polyline points="1.8,1.8 8.25,9.7 14.7,1.8" fill="none" stroke="#97A0AF" stroke-width="3.6" stroke-linecap="round" stroke-linejoin="round"/></svg><div style="position:absolute;left:545.30px;top:43.00px;font-size:28px;line-height:28px;font-weight:400;color:#344563;letter-spacing:1.222px;-webkit-text-stroke:0.55px #344563">Projects</div><svg style="position:absolute;left:663px;top:51px" width="16.5" height="11.5" viewBox="0 0 16.5 11.5"><polyline points="1.8,1.8 8.25,9.7 14.7,1.8" fill="none" stroke="#97A0AF" stroke-width="3.6" stroke-linecap="round" stroke-linejoin="round"/></svg><div style="position:absolute;left:718.40px;top:43.00px;font-size:28px;line-height:28px;font-weight:400;color:#344563;letter-spacing:1.063px;-webkit-text-stroke:0.55px #344563">Filters</div><svg style="position:absolute;left:809px;top:51px" width="16.5" height="11.5" viewBox="0 0 16.5 11.5"><polyline points="1.8,1.8 8.25,9.7 14.7,1.8" fill="none" stroke="#97A0AF" stroke-width="3.6" stroke-linecap="round" stroke-linejoin="round"/></svg><div style="position:absolute;left:864.50px;top:43.00px;font-size:28px;line-height:28px;font-weight:400;color:#344563;letter-spacing:0.913px;-webkit-text-stroke:0.55px #344563">Dashboards</div><svg style="position:absolute;left:1032px;top:51px" width="16.5" height="11.5" viewBox="0 0 16.5 11.5"><polyline points="1.8,1.8 8.25,9.7 14.7,1.8" fill="none" stroke="#97A0AF" stroke-width="3.6" stroke-linecap="round" stroke-linejoin="round"/></svg><div style="position:absolute;left:1089.00px;top:43.00px;font-size:28px;line-height:28px;font-weight:400;color:#344563;letter-spacing:0.633px;-webkit-text-stroke:0.55px #344563">Teams</div><svg style="position:absolute;left:1182px;top:51px" width="16.5" height="11.5" viewBox="0 0 16.5 11.5"><polyline points="1.8,1.8 8.25,9.7 14.7,1.8" fill="none" stroke="#97A0AF" stroke-width="3.6" stroke-linecap="round" stroke-linejoin="round"/></svg><div style="position:absolute;left:1239.00px;top:43.00px;font-size:28px;line-height:28px;font-weight:400;color:#0052CC;letter-spacing:1.060px;-webkit-text-stroke:0.55px #0052CC">Apps</div><svg style="position:absolute;left:1314px;top:51px" width="16.5" height="11.5" viewBox="0 0 16.5 11.5"><polyline points="1.8,1.8 8.25,9.7 14.7,1.8" fill="none" stroke="#7FA8EE" stroke-width="3.6" stroke-linecap="round" stroke-linejoin="round"/></svg><div style="position:absolute;left:1234px;top:106px;width:100px;height:6px;background:#0052CC;border-radius:1px 1px 0 0"></div><div style="position:absolute;left:1374px;top:24px;width:137px;height:64px;background:#0052CC;border-radius:6px"></div><div style="position:absolute;left:1398.20px;top:42.20px;font-size:29px;line-height:29px;font-weight:700;color:#fff;letter-spacing:-0.469px;">Create</div><div style="position:absolute;left:1890px;top:24px;width:399px;height:64px;box-sizing:border-box;border:3px solid #DFE1E6;border-radius:10px;background:#fff"></div><svg style="position:absolute;left:1908px;top:43px" width="28" height="28" viewBox="0 0 28 28"><circle cx="11.5" cy="11.5" r="8.5" fill="none" stroke="#5E6C84" stroke-width="3"/><line x1="18" y1="18" x2="24" y2="24" stroke="#5E6C84" stroke-width="3" stroke-linecap="round"/></svg><div style="position:absolute;left:1954.00px;top:41.50px;font-size:29px;line-height:29px;font-weight:400;color:#5E6C84;letter-spacing:-0.551px;">Search</div><svg style="position:absolute;left:2314.5px;top:32.5px" width="44" height="44" viewBox="0 0 44 44"><g transform="rotate(42 22 22)" fill="#344563"><path d="M22 3.5c-1.4 0-2.5 1.1-2.5 2.5v0.8C13.8 8.2 11 13 11 18.5v8L7 31.5v2.5h30v-2.5L33 26.5v-8c0-5.5-2.8-10.3-8.5-11.7V6c0-1.4-1.1-2.5-2.5-2.5z"/><path d="M17.5 36.5a4.5 4.5 0 0 0 9 0z"/></g></svg><svg style="position:absolute;left:2394px;top:36px" width="40" height="40" viewBox="0 0 40 40"><circle cx="20" cy="20" r="20" fill="#344563"/><path d="M13.6 15.5c0-3.8 2.9-6.3 6.5-6.3s6.4 2.5 6.4 5.9c0 2.7-1.7 4-3.4 5.1-1.4 0.9-1.8 1.5-1.8 2.8v1.3" fill="none" stroke="#fff" stroke-width="4" stroke-linecap="round"/><circle cx="21.3" cy="30.4" r="2.5" fill="#fff"/></svg><svg style="position:absolute;left:2473px;top:35px" width="41" height="41" viewBox="0 0 41 41"><path fill="#344563" stroke="#344563" stroke-width="1.6" stroke-linejoin="round" d="M31.50 20.08 L37.24 23.45 L34.43 30.25 L27.98 28.58Z M28.58 27.98 L30.25 34.43 L23.45 37.24 L20.08 31.50Z M20.92 31.50 L17.55 37.24 L10.75 34.43 L12.42 27.98Z M13.02 28.58 L6.57 30.25 L3.76 23.45 L9.50 20.08Z M9.50 20.92 L3.76 17.55 L6.57 10.75 L13.02 12.42Z M12.42 13.02 L10.75 6.57 L17.55 3.76 L20.92 9.50Z M20.08 9.50 L23.45 3.76 L30.25 6.57 L28.58 13.02Z M27.98 12.42 L34.43 10.75 L37.24 17.55 L31.50 20.92Z"/><circle cx="20.5" cy="20.5" r="11.8" fill="none" stroke="#344563" stroke-width="6"/></svg><div style="position:absolute;left:2554px;top:32px;width:48px;height:48px;border-radius:50%;overflow:hidden"><svg style="position:absolute;left:0;top:0" width="48" height="48" viewBox="0 0 48 48"><g><rect width="48" height="48" fill="#6E8C58"/><circle cx="5" cy="14" r="6" fill="#93AE74"/><circle cx="43" cy="30" r="7" fill="#5A7646"/><circle cx="4" cy="34" r="5" fill="#8FAA6E"/><circle cx="44" cy="12" r="5" fill="#86A268"/><path d="M6 48c3-6 9-8 18.5-8s15.5 2 18.5 8z" fill="#E9615B"/><rect x="19.5" y="34" width="10" height="8" fill="#E6BFA3"/><ellipse cx="24.5" cy="27.5" rx="12" ry="13.5" fill="#EFD2BC"/><path d="M11 27C9 11 15.5 4 24.5 4S40 11 38 27C37 20 35.5 16.5 33.5 15.5C28 17.5 21 17.5 15.5 15.5C13.5 17 12 21 11 27z" fill="#111"/><line x1="13" y1="26" x2="36" y2="26" stroke="#A99" stroke-width="0.9"/><path d="M20 34q4.5 2.5 9 0" stroke="#fff" stroke-width="1.8" fill="none"/></g></svg></div></div>
</div></body></html>
